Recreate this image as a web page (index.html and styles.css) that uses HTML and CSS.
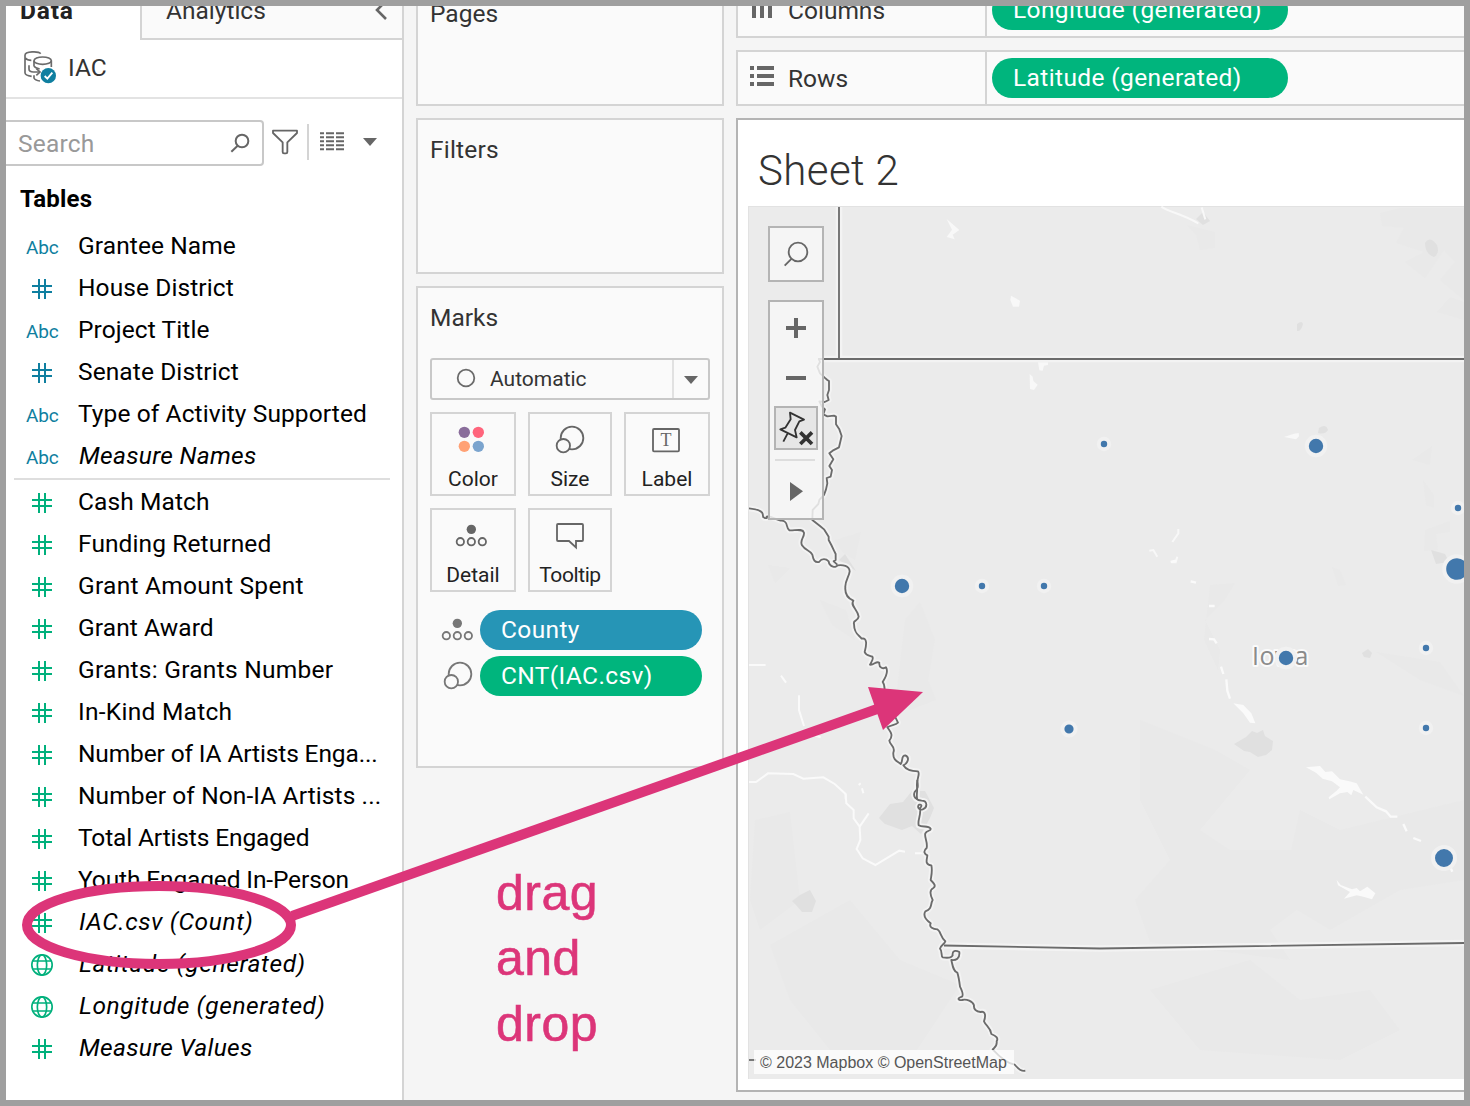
FILE: index.html
```html
<!DOCTYPE html>
<html lang="en">
<head>
<meta charset="utf-8">
<title>Sheet 2</title>
<link rel="stylesheet" href="styles.css">
</head>
<body>
<svg class="defs" aria-hidden="true">
  <symbol id="hash" viewBox="93 174 66 66"><path d="M117 177v60M135 177v60M96 198h60M96 216h60" fill="none" stroke="currentColor" stroke-width="6"/></symbol>
  <symbol id="globe" viewBox="93 402 66 66"><g fill="none" stroke="currentColor" stroke-width="5"><circle cx="126" cy="435" r="30.5"/><ellipse cx="126" cy="435" rx="14" ry="30.5"/><path d="M98 423h56M98 447h56"/></g></symbol>
</svg>
<div class="frame">
  <div class="app">
    <aside class="data-pane">
      <div class="tabs">
        <div class="tab active">Data</div>
        <div class="tab idle"><span>Analytics</span>
          <svg class="chevron" viewBox="0 0 12 20"><path d="M11 1 2 10l9 9" fill="none" stroke="#666" stroke-width="2.6"/></svg>
        </div>
      </div>
      <div class="source">
        <svg class="source-icon" viewBox="66 150 108 108">
          <g fill="none" stroke="#6b6b6b" stroke-width="5">
            <path d="M122 164C116 156 75 156 75 169V221C75 226 82 230 95 232M76 177C79 181 86 184 94 184"/>
            <ellipse cx="128" cy="185" rx="26" ry="11"/>
            <path d="M102 185V202M154 185V204M102 202C105 206 111 208 119 210M87 199V210C87 216 92 219 100 219H117M102 229V237C104 242 111 245 120 246"/>
            <path d="m109 209 11 10-11 10"/>
          </g>
          <circle cx="145" cy="230" r="23" fill="#0f7fa0"/>
          <path d="m134 231 8 8 15-18" fill="none" stroke="#fff" stroke-width="5.500"/>
        </svg>
        <span>IAC</span>
      </div>
      <div class="search-row">
        <div class="search"><span>Search</span>
          <svg class="lens" viewBox="690 399 60 60"><g fill="none" stroke="#666" stroke-width="6"><circle cx="726" cy="423" r="19"/><path d="m713 437-19 18"/></g></svg>
        </div>
        <svg class="funnel" viewBox="813 387 84 78"><path d="M819 392H891V399L862 427V456Q862 460 858 460H852Q848 460 848 456V427L819 399Z" fill="none" stroke="#666" stroke-width="5.500" stroke-linejoin="round"/></svg>
        <i class="bar"></i>
        <svg class="grid-icon" viewBox="960 395 72 57"><path d="M960 399h72M960 411h72M960 423h72M960 435h72M960 447h72" stroke="#666" stroke-width="6"/><path d="M975 395v57M1005 395v57" stroke="#fff" stroke-width="6"/></svg>
        <svg class="caret" viewBox="0 0 14 8"><path d="M0 0h14L7 8z" fill="#666"/></svg>
      </div>
      <h2 class="tables">Tables</h2>
      <ul class="fields dims">
        <li><b>Abc</b><span>Grantee Name</span></li>
        <li><svg><use href="#hash"/></svg><span>House District</span></li>
        <li><b>Abc</b><span>Project Title</span></li>
        <li><svg><use href="#hash"/></svg><span>Senate District</span></li>
        <li><b>Abc</b><span>Type of Activity Supported</span></li>
        <li class="gen"><b>Abc</b><span>Measure Names</span></li>
      </ul>
      <ul class="fields measures">
        <li><svg><use href="#hash"/></svg><span>Cash Match</span></li>
        <li><svg><use href="#hash"/></svg><span>Funding Returned</span></li>
        <li class="wide"><svg><use href="#hash"/></svg><span>Grant Amount Spent</span></li>
        <li><svg><use href="#hash"/></svg><span>Grant Award</span></li>
        <li class="wide"><svg><use href="#hash"/></svg><span>Grants: Grants Number</span></li>
        <li class="wide"><svg><use href="#hash"/></svg><span>In-Kind Match</span></li>
        <li class="tight"><svg><use href="#hash"/></svg><span>Number of IA Artists Enga...</span></li>
        <li><svg><use href="#hash"/></svg><span>Number of Non-IA Artists ...</span></li>
        <li class="tight"><svg><use href="#hash"/></svg><span>Total Artists Engaged</span></li>
        <li class="tight"><svg><use href="#hash"/></svg><span>Youth Engaged In-Person</span></li>
        <li class="gen geo"><svg><use href="#hash"/></svg><span>IAC.csv (Count)</span></li>
        <li class="gen geo"><svg><use href="#globe"/></svg><span>Latitude (generated)</span></li>
        <li class="gen geo"><svg><use href="#globe"/></svg><span>Longitude (generated)</span></li>
        <li class="gen"><svg><use href="#hash"/></svg><span>Measure Values</span></li>
      </ul>
    </aside>

    <section class="cards">
      <div class="card pages"><h3>Pages</h3></div>
      <div class="card filters"><h3>Filters</h3></div>
      <div class="card marks">
        <h3>Marks</h3>
        <div class="select">
          <svg class="ring" viewBox="0 0 20 20"><circle cx="10" cy="10" r="8.300" fill="none" stroke="#6b6b6b" stroke-width="1.800"/></svg>
          <span>Automatic</span>
          <div class="drop"><svg class="caret" viewBox="0 0 14 8"><path d="M0 0h14L7 8z" fill="#666"/></svg></div>
        </div>
        <div class="buttons">
          <div class="btn"><svg viewBox="66 342 246 150"><circle cx="163" cy="397" r="17" fill="#8a6d9b"/><circle cx="205" cy="397" r="17" fill="#ff657c"/><circle cx="163" cy="439" r="17" fill="#ffa175"/><circle cx="205" cy="439" r="17" fill="#7ba4ce"/></svg><span>Color</span></div>
          <div class="btn"><svg viewBox="360 342 240 150"><g fill="#fafafa" stroke="#666" stroke-width="5.500"><circle cx="486" cy="414" r="34"/><circle cx="460" cy="437" r="20"/></g></svg><span>Size</span></div>
          <div class="btn"><svg viewBox="648 342 246 150"><rect x="729" y="387" width="78" height="67" rx="3" fill="none" stroke="#666" stroke-width="5.500"/><text x="768" y="438" text-anchor="middle" class="tee">T</text></svg><span>Label</span></div>
          <div class="btn"><svg viewBox="66 630 246 150"><circle cx="184" cy="688" r="14" fill="#666"/><g fill="none" stroke="#666" stroke-width="5.500"><circle cx="151" cy="725" r="11"/><circle cx="184" cy="725" r="11"/><circle cx="217" cy="725" r="11"/></g></svg><span>Detail</span></div>
          <div class="btn"><svg viewBox="360 630 240 150"><path d="M444 672H516Q519 672 519 675V720Q519 723 516 723H498V742L477 723H444Q441 723 441 720V675Q441 672 444 672Z" fill="none" stroke="#666" stroke-width="5.500"/></svg><span class="tip">Tooltip</span></div>
        </div>
        <div class="assigned">
          <svg viewBox="60 930 150 120"><circle cx="142" cy="970" r="14" fill="#777"/><g fill="none" stroke="#777" stroke-width="5.500"><circle cx="109" cy="1007" r="11"/><circle cx="142" cy="1007" r="11"/><circle cx="175" cy="1007" r="11"/></g></svg>
          <div class="pill blue">County</div>
        </div>
        <div class="assigned">
          <svg viewBox="60 1068 150 120"><g fill="#fafafa" stroke="#777" stroke-width="5.500"><circle cx="150" cy="1122" r="34"/><circle cx="124" cy="1145" r="20"/></g></svg>
          <div class="pill">CNT(IAC.csv)</div>
        </div>
      </div>
    </section>

    <main class="work">
      <div class="shelf">
        <div class="shelf-name"><svg viewBox="0 0 24 20"><path d="M4 0v20M12 0v20M20 0v20" stroke="#666" stroke-width="4"/></svg>Columns</div>
        <div class="pill">Longitude (generated)</div>
      </div>
      <div class="shelf">
        <div class="shelf-name"><svg viewBox="0 0 24 20"><path d="M0 2h4M0 10h4M0 18h4M7 2h17M7 10h17M7 18h17" stroke="#666" stroke-width="4"/></svg>Rows</div>
        <div class="pill">Latitude (generated)</div>
      </div>
      <div class="sheet">
        <h1>Sheet 2</h1>
        <div class="map">
          <svg class="canvas" viewBox="748 206 716 873">
            <rect x="748" y="206" width="716" height="873" fill="#ebebeb"/>
            <path d="M748 206H1464V207H749V1079H748Z" fill="#e2e2e2"/>
            <g fill="#e9e9e9">
              <path d="M1380 213 1400 208H1464V300L1440 280 1455 262 1444 250 1425 278 1405 262 1424 252 1396 243 1404 228 1382 226Z"/>
              <path d="M1437 312 1450 297 1464 302V320ZM1187 225 1215 232V248L1200 250 1196 235ZM1412 460 1432 446 1430 465ZM1423 480 1434 495V508L1426 505ZM1425 530 1450 521V532L1436 534 1438 550 1424 551Z"/>
              <path d="M768 565 790 568 775 583ZM820 600 846 610 855 640 832 625ZM905 620 920 602 935 640 928 680 936 700 910 710 897 690Z"/>
              <path d="M835 540 861 532 855 560 842 552ZM755 820 790 812 800 900 760 930 750 900ZM770 945 850 900 900 960 960 985 910 1060 830 1050 790 1000Z"/>
              <path d="M1140 720 1215 750 1250 770 1225 800 1200 830 1230 850 1300 850 1310 900 1270 930 1290 960 1150 942 1135 900 1170 860 1140 800Z"/>
              <path d="M1376 652 1440 662 1464 696 1420 680ZM1300 810 1340 830 1464 800V880L1400 890 1330 930 1280 900ZM1210 585 1235 583 1225 600 1205 620 1220 650 1218 670 1204 640Z"/>
              <path d="M1150 990 1250 960 1300 1000 1370 990 1400 1030 1340 1060 1200 1050ZM1332 567 1340 570 1346 585 1338 586Z"/>
            </g>
            <g fill="#e0e0e0">
              <path d="M879 818 890 804 903 802 912 791H925L934 808 930 818 921 834 912 826 902 830 885 824Z"/>
              <path d="M792 901 800 895 810 890 816 901 812 912 802 912 796 905ZM1234 744 1246 737 1252 731 1257 733 1263 730 1265 736 1273 741 1272 750 1266 755 1258 757 1250 752 1244 751Z"/>
              <path d="M1425 243Q1430 235 1437 245 1440 254 1434 257 1425 254 1425 243ZM1297 324Q1302 320 1303 324 1301 332 1297 331ZM1319 428Q1326 423 1328 430 1325 435 1318 433ZM1196 219 1203 212 1210 221 1203 225ZM1431 550 1445 554 1449 562 1436 564ZM1362 653 1368 649 1372 653 1370 658 1364 657ZM839 560 845 554 856 571Z"/>
            </g>
            <g transform="translate(740 200) scale(.33333)" fill="#f8f8f8">
              <path d="M620 57 658 90 638 104 644 118 620 111 636 89ZM813 287 840 302 837 320H819L811 300ZM894 487H924V495L912 497 908 512 898 511ZM869 522 878 530 880 543 893 554 882 570 870 567Z"/>
              <path d="M1632 711 1662 701 1676 699 1677 709 1668 718Z"/>
              <path d="M1264 20C1290 38 1320 38 1375 70M1385 22 1396 58M1315 987V1000L1297 1026M1228 1052 1240 1050 1252 1070M1295 1087H1307L1312 1070" fill="none" stroke="#f8f8f8" stroke-width="6"/>
            </g>
            <g transform="translate(1140 560) scale(.33333)" fill="#fafafa">
              <path d="M498 622 540 618 556 636 576 634 600 658 628 664 650 670 670 704 640 690 634 706 622 696 600 700 568 718 566 712 590 692 600 682 576 664 548 656 528 638ZM590 960 602 975 636 988 650 984 660 994 682 980 706 1000 696 1018 670 1010 650 1006 612 1016 630 996 594 976ZM280 430 310 435 334 460 346 490 330 488 310 460Z"/>
              <path d="M92 6 108 2M152 64 168 68M207 138H224M207 237 222 238 230 250M243 320 250 342M259 358 262 392 270 416M676 710 710 742 738 754 752 770H772M790 792 800 814M820 834 843 843M928 915 937 935" fill="none" stroke="#fafafa" stroke-width="7"/>
            </g>
            <g transform="translate(740 500) scale(.33333)" fill="none" stroke="#fafafa" stroke-width="6">
              <path d="M27 495H77M123 527 138 548M177 586V630L192 678M225 707 242 712M27 846H48L84 820 160 822 190 836 250 832 284 852 317 882V898"/>
              <path d="M317 882 319 910 341 930 341 955 359 980 361 1020 350 1047 368 1075 406 1095 478 1052 495 1055M359 980 386 940M525 1060H552M356 855 362 850M366 865 370 880"/>
            </g>
            <defs>
              <path id="river-n" d="M236 476 240 486 232 500 240 520 254 533 262 540 267 543V570L262 585 266 600 254 606 238 604 246 620 255 628 250 643 262 649 282 647 288 650V673L298 688 305 708 297 742 278 752 268 760 280 778 268 798 276 810 272 830 260 834 262 850 258 868 252 885 238 900 235 912 218 930 217 960 240 978 252 988 266 1010 266 1020 274 1035 282 1052 287 1062V1080L281 1084 292 1094"/>
              <path id="river-w" d="M27 25Q50 27 62 34C76 42 62 50 74 54Q84 56 80 50C92 45 110 62 126 62 146 64 136 82 148 91 165 92 188 84 192 98 194 112 178 120 186 136 196 152 210 150 217 164 220 180 224 188 237 186 246 174 258 176 266 184 268 202 290 204 292 196 308 194 328 196 329 214 328 228 314 244 316 262 314 286 326 296 340 302 330 318 352 326 356 350 354 366 338 358 342 372 342 402 358 406 365 416 382 412 380 434 374 456 378 468 390 466 397 470 402 476 396 482 390 494 402 496 408 482 418 488 416 504 430 508 438 502 445 514 440 528 428 546 438 558 430 574 438 588 450 620 458 638 474 668 466 676 452 674 442 682 450 694 462 704 448 722 450 738 468 738 460 758 458 780 472 784 482 792 490 784 482 766 496 766 510 772 504 790 490 796 496 806 512 814 534 814 542 822 528 838 531 860 533 876 528 888 532 898"/>
              <path id="river-s" d="M532 0C534 18 536 26 524 36 518 50 528 60 545 62 562 62 564 82 548 88 536 92 530 78 538 74 546 72 546 80 540 84 544 108 532 118 536 136 548 144 564 134 572 146 574 154 560 150 556 160 552 170 564 186 560 204 548 214 554 222 562 226 562 236 552 254 574 256 578 272 574 286 572 300 580 308 590 318 580 324 568 330 570 344 578 360 570 374 578 386 556 394 548 408 558 420 572 430 566 442 580 448 592 448 604 456 602 474 616 484 614 492 602 496 600 506 608 514 602 528 608 532 620 534 634 534 638 526 636 512 646 510 658 516 660 536 648 542 634 540 638 558 640 574 652 578 656 590 658 604 660 620 666 632 672 644 666 650 652 654 652 662 666 660 680 656 698 664 702 676 700 690 710 694 722 696 736 692 738 706 732 724 738 738 752 742 754 762 768 768 776 774 770 784 772 800 764 802 758 808 780 832 800 850 824 854 832 862 840 876 856 872 860 880V890"/>
              <path id="state" d="M839 207V359M818 359H1464M944 945.500 1100 948.500 1464 943"/>
            </defs>
            <g fill="none" stroke="#f3f3f3" stroke-linejoin="round">
              <use href="#state" stroke-width="6.500"/>
              <g stroke-width="17"><use href="#river-n" transform="translate(740 200) scale(.33333)"/><use href="#river-w" transform="translate(740 500) scale(.33333)"/><use href="#river-s" transform="translate(740 780) scale(.33333)"/></g>
            </g>
            <g fill="none" stroke="#6b6b6b" stroke-linejoin="round">
              <use href="#state" stroke-width="1.800"/>
              <g stroke-width="5.500"><use href="#river-n" transform="translate(740 200) scale(.33333)"/><use href="#river-w" transform="translate(740 500) scale(.33333)"/><use href="#river-s" transform="translate(740 780) scale(.33333)"/></g>
              <path d="M749 1060H756" stroke-width="1.800"/>
            </g>
            <text class="place" x="1252" y="665">Iowa</text>
            <g class="dots">
              <circle cx="1104" cy="444" r="5.200" stroke-width="4"/>
              <circle cx="1316" cy="446" r="9.200" stroke-width="4"/>
              <circle cx="1458" cy="508" r="5.200" stroke-width="4"/>
              <circle cx="1457" cy="569" r="12.800" stroke-width="4"/>
              <circle cx="902" cy="586" r="9.200" stroke-width="4"/>
              <circle cx="982" cy="586" r="5.200" stroke-width="4"/>
              <circle cx="1044" cy="586" r="5.200" stroke-width="4"/>
              <circle cx="1286" cy="658" r="9.200" stroke-width="4"/>
              <circle cx="1426" cy="648" r="5.200" stroke-width="4"/>
              <circle cx="1426" cy="728" r="5.200" stroke-width="4"/>
              <circle cx="1069" cy="729" r="6.600" stroke-width="4"/>
              <circle cx="1444" cy="858" r="11" stroke-width="4"/>
            </g>
          </svg>
          <div class="map-search"><svg viewBox="90 84 156 156"><g fill="none" stroke="#666" stroke-width="5.500"><circle cx="174" cy="156" r="28"/><path d="m155 176-21 21"/></g></svg></div>
          <div class="map-tools"><svg viewBox="90 306 156 648">
            <path d="M168 354v60M138 384h60M138 534h60" stroke="#666" stroke-width="12"/>
            <rect x="105" y="621" width="126" height="126" fill="#e6e6e6" stroke="#b4b4b4" stroke-width="6"/>
            <path d="M150 638 192 659 178 664 165 690 170 712 121 688 136 683 152 658ZM143 700 130 725" fill="none" stroke="#333" stroke-width="5.500" stroke-linejoin="round"/>
            <path d="m181 697 35 35M216 697l-35 35" stroke="#333" stroke-width="11"/>
            <path d="M105 780h120" stroke="#ddd" stroke-width="6"/>
            <path d="m150 846 39 28-39 29Z" fill="#666"/>
          </svg></div>
          <div class="credit">© 2023 Mapbox © OpenStreetMap</div>
        </div>
      </div>
    </main>
  </div>
</div>
<svg class="note" viewBox="0 0 1470 1106">
  <ellipse cx="159" cy="925" rx="132" ry="39" fill="none" stroke="#dc3579" stroke-width="10"/>
  <path d="M292 916 880 708" stroke="#dc3579" stroke-width="10"/>
  <path d="m868 687 55 5-40 38Z" fill="#dc3579"/>
  <text x="496" y="910">drag</text><text x="496" y="975">and</text><text x="496" y="1041">drop</text>
</svg>
</body>
</html>
```
FILE: styles.css
```css
* { box-sizing: border-box; }
body { margin: 0; width: 1470px; height: 1106px; overflow: hidden; position: relative; font-family: Roboto, "Open Sans", sans-serif; font-size: 24.5px; color: #333; }
h1, h2, h3, ul { margin: 0; padding: 0; font-weight: 400; }
svg { display: block; flex: none; }
.defs { position: absolute; width: 0; height: 0; }
.frame { width: 1470px; height: 1106px; border: 6px solid #9f9f9f; overflow: hidden; background: #f5f5f5; }
/* the workspace is scrolled a little past its top edge */
.app { display: grid; grid-template-columns: 398px 332px 728px; height: 1118px; margin-top: -24px; }

.data-pane { background: #fff; border-right: 2px solid #d4d4d4; }
.tabs { display: flex; height: 58px; }
.tab { line-height: 57px; }
.active { width: 134px; padding-left: 14px; font-weight: 700; color: #222; letter-spacing: .8px; }
.idle { flex: 1; display: flex; justify-content: space-between; align-items: center; padding: 0 15px 0 24px; background: #fafafa; border-left: 2px solid #d4d4d4; border-bottom: 2px solid #d4d4d4; }
.chevron { width: 12px; height: 20px; }
.source { display: flex; align-items: center; height: 59px; padding: 0 0 3px 16px; border-bottom: 2px solid #e3e3e3; }
.source-icon { width: 36px; height: 36px; margin-right: 10px; }
.search-row { display: flex; align-items: center; height: 46px; margin-top: 21px; }
.search { display: flex; align-items: center; justify-content: space-between; width: 258px; height: 46px; padding: 0 12px; border: 2px solid #c8c8c8; border-left: 0; border-radius: 0 4px 4px 0; color: #999; letter-spacing: .2px; }
.lens { width: 20px; height: 20px; }
.funnel { width: 28px; height: 26px; margin: -2px 8px 0 7px; }
.bar { width: 2px; height: 36px; background: #d4d4d4; margin-top: -3px; }
.grid-icon { width: 24px; height: 19px; margin: -4px 19px 0 11px; }
.caret { width: 14px; height: 8px; }
.search-row .caret { margin-top: -2px; }
.tables { font-size: 24px; font-weight: 700; color: #000; line-height: 32px; padding: 17px 0 0 14px; height: 59px; letter-spacing: .2px; }
.fields { list-style: none; color: #000; }
.fields li { display: flex; align-items: center; height: 42px; padding-left: 19px; white-space: nowrap; letter-spacing: .1px; }
.fields li.wide { letter-spacing: .27px; }
.fields li.tight { letter-spacing: -.13px; }
.fields li > span { margin-top: -2px; }
.fields li > svg, .fields li > b { width: 34px; height: 22px; margin: 2px 19px 0 0; flex: none; }
.fields b { font-size: 19px; line-height: 24px; font-weight: 400; padding-left: 1px; letter-spacing: -.2px; }
.dims svg, .dims b { color: #0f7fa0; }
.measures svg { color: #00b07c; }
.dims { padding-bottom: 1px; }
.dims::after { content: ""; display: block; height: 2px; margin: 1px 12px 0 8px; background: #dedede; }
.gen span { font-style: italic; padding-left: 1px; letter-spacing: .3px; }
.geo span { letter-spacing: .6px; }

.cards { display: flex; flex-direction: column; gap: 12px; padding-left: 12px; }
.card { width: 308px; border: 2px solid #d4d4d4; background: #fafafa; padding: 0 12px; }
.card h3 { height: 58px; line-height: 59px; font-size: 24.5px; font-weight: 400; }
.filters h3 { letter-spacing: .2px; }
.pages { height: 124px; }
.filters { height: 156px; }
.marks { height: 482px; }
.select { display: flex; align-items: center; width: 280px; height: 42px; margin-top: 12px; border: 2px solid #c8c8c8; border-radius: 3px; font-size: 21px; padding-left: 24px; }
.ring { width: 20px; height: 20px; margin: -2px 14px 0 0; }
.select .drop { display: grid; place-items: center; width: 36px; height: 38px; margin-left: auto; border-left: 2px solid #e1e1e1; padding-top: 2px; }
.buttons { display: grid; grid-template-columns: 86px 84px 86px; gap: 12px; margin: 12px 0 18px; }
.btn { height: 84px; border: 2px solid #d4d4d4; font-size: 21px; color: #222; text-align: center; }
.btn svg { width: 100%; height: 50px; }
.btn span { display: block; line-height: 30px; }
.btn .tip { letter-spacing: -.4px; }
.tee { font: 54px "Liberation Serif", serif; fill: #666; }
.assigned { display: flex; margin-bottom: 6px; }
.assigned svg { width: 50px; height: 40px; }
.assigned .pill { width: 222px; }
.pill { width: 296px; height: 40px; border-radius: 20px; background: #00b57d; color: #fff; line-height: 40px; padding-left: 21px; white-space: nowrap; letter-spacing: .38px; }
.pill.blue { background: #2695b6; }

.work { display: flex; flex-direction: column; gap: 12px; }
.shelf { display: flex; align-items: center; height: 56px; border: 2px solid #d4d4d4; border-right: 0; background: #fafafa; }
.shelf-name { display: flex; align-items: center; width: 249px; height: 52px; padding-left: 12px; border-right: 2px solid #d4d4d4; margin-right: 5px; }
.shelf-name svg { width: 24px; height: 20px; margin: -4px 14px 0 0; }
.sheet { height: 974px; border: 2px solid #b4b4b4; border-right: 0; background: #fff; }
.sheet h1 { font-size: 42px; font-weight: 300; height: 86px; line-height: 101px; padding-left: 20px; letter-spacing: .4px; }
.map { position: relative; width: 716px; height: 873px; margin-left: 10px; }
.canvas { width: 716px; height: 873px; }
.place { font: 25px "Open Sans", sans-serif; letter-spacing: .4px; fill: #8b8b8b; stroke: #fafafa; stroke-width: 4; paint-order: stroke; stroke-linejoin: round; }
.dots { fill: #4278ac; stroke: #f1f1f1; }
.map-search, .map-tools { position: absolute; left: 20px; width: 56px; border: 2px solid #b4b4b4; background: rgba(247, 247, 247, .84); }
.map-search { top: 20px; height: 56px; }
.map-tools { top: 94px; height: 220px; }
.credit { position: absolute; left: 6px; top: 844px; width: 260px; height: 24px; padding-left: 6px; background: rgba(255, 255, 255, .75); font: 16px/25px "Liberation Sans", sans-serif; color: #555; white-space: nowrap; }
.note { position: absolute; left: 0; top: 0; width: 1470px; height: 1106px; }
.note text { font: 50px "Liberation Sans", sans-serif; letter-spacing: .5px; fill: #dc3579; stroke: #dc3579; stroke-width: .6; }
```
